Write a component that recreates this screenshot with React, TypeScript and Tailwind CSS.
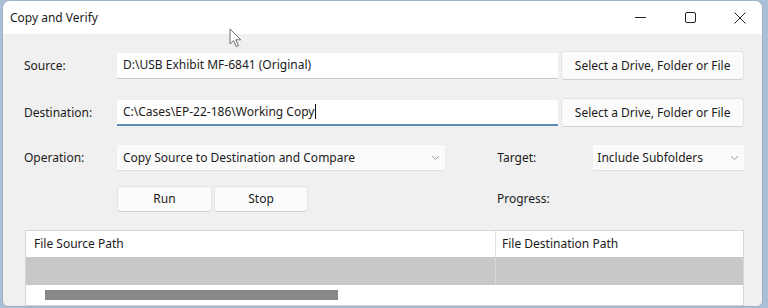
const font = { fontFamily: '"Segoe UI", "Noto Sans", sans-serif' };

function Chevron() {
  return (
    <svg width="9" height="6" viewBox="0 0 9 6" className="shrink-0">
      <path d="M1 1.2 L4.5 4.6 L8 1.2" fill="none" stroke="#9a9a9a" strokeWidth="1" />
    </svg>
  );
}

function Button({ label, className }: { label: string; className: string }) {
  return (
    <div
      className={`flex items-center justify-center rounded-[4px] border border-[#e3e3e3] border-b-[#d0d0d0] bg-[#fbfbfb] text-[12px] text-[#1b1b1b] ${className}`}
    >
      {label}
    </div>
  );
}

function Label({ text, className = "w-[93px]" }: { text: string; className?: string }) {
  return <div className={`shrink-0 text-[12px] text-[#1b1b1b] ${className}`}>{text}</div>;
}

export default function App() {
  return (
    <div className="h-[308px] w-[768px] overflow-hidden bg-[#a9bfd6]" style={font}>
      <div className="relative ml-[2px] h-[307px] w-[761px] overflow-hidden rounded-t-[8px] rounded-b-[6px] border border-[#9fb0c2] bg-[#f0f0f0]">
        {/* title bar */}
        <div className="flex h-[33px] items-center bg-white">
          <div className="pl-[7px] text-[12px] text-[#1b1b1b]">Copy and Verify</div>
          <div className="ml-auto flex h-full items-center">
            <div className="flex h-full w-[50px] items-center justify-center">
              <svg width="11" height="11" viewBox="0 0 11 11">
                <path d="M0 5.5 H11" stroke="#222" strokeWidth="1" />
              </svg>
            </div>
            <div className="mr-[3px] flex h-full w-[50px] items-center justify-center">
              <svg width="11" height="11" viewBox="0 0 11 11">
                <rect x="0.5" y="0.5" width="10" height="10" rx="1.5" fill="none" stroke="#222" strokeWidth="1" />
              </svg>
            </div>
            <div className="flex h-full w-[44px] items-center justify-center">
              <svg width="12" height="12" viewBox="0 0 12 12">
                <path d="M0.5 0.5 L11.5 11.5 M11.5 0.5 L0.5 11.5" stroke="#222" strokeWidth="1" />
              </svg>
            </div>
          </div>
        </div>

        {/* body */}
        <div className="pl-[21px] pr-[18px] pt-[17px]">
          <div className="flex h-[29px] items-center">
            <Label text="Source:" />
            <div className="flex h-[26px] w-[442px] items-center border-b border-[#c9c9c9] bg-white pl-[6px] text-[12px] text-[#1b1b1b]">
              D:\USB Exhibit MF-6841 (Original)
            </div>
            <Button label="Select a Drive, Folder or File" className="ml-[3px] h-[29px] w-[183px]" />
          </div>

          <div className="mt-[18px] flex h-[29px] items-center">
            <Label text="Destination:" />
            <div className="flex h-[26px] w-[442px] items-center border-b-2 border-[#5b8db8] bg-white pl-[6px] text-[12px] text-[#1b1b1b]">
              C:\Cases\EP-22-186\Working Copy
              <span className="ml-[1px] h-[15px] w-[1px] bg-[#111]" />
            </div>
            <Button label="Select a Drive, Folder or File" className="ml-[3px] h-[29px] w-[183px]" />
          </div>

          <div className="mt-[18px] flex h-[25px] items-center">
            <Label text="Operation:" />
            <div className="flex h-[25px] w-[329px] items-center justify-between bg-[#fbfbfb] pl-[6px] pr-[5px] text-[12px] text-[#1b1b1b] shadow-[0_1px_1px_rgba(0,0,0,0.06)]">
              Copy Source to Destination and Compare
              <Chevron />
            </div>
            <Label text="Target:" className="ml-[52px] w-[96px]" />
            <div className="flex h-[25px] w-[151px] items-center justify-between bg-[#fbfbfb] pl-[4px] pr-[5px] text-[12px] text-[#1b1b1b] shadow-[0_1px_1px_rgba(0,0,0,0.06)]">
              Include Subfolders
              <Chevron />
            </div>
          </div>

          <div className="mt-[16px] flex h-[26px] items-center">
            <div className="w-[93px] shrink-0" />
            <Button label="Run" className="h-[26px] w-[95px]" />
            <Button label="Stop" className="ml-[2px] h-[26px] w-[94px]" />
            <Label text="Progress:" className="ml-[189px] w-[80px]" />
          </div>

          <div className="ml-[1px] mt-[18px] w-[719px] border border-[#d6d6d6] bg-white">
            <div className="flex h-[26px] items-center text-[12px] text-[#1b1b1b]">
              <div className="w-[469px] pl-[8px]">File Source Path</div>
              <div className="flex h-full items-center border-l border-[#e2e2e2] pl-[6px]">File Destination Path</div>
            </div>
            <div className="flex h-[28px] bg-[#c8c8c8]">
              <div className="w-[469px]" />
              <div className="border-l border-[#d8d8d8]" />
            </div>
            <div className="h-[20px] pl-[19px] pt-[5px]">
              <div className="h-[10px] w-[293px] bg-[#888888]" />
            </div>
          </div>
        </div>

        {/* mouse pointer */}
        <svg className="absolute left-[226px] top-[27px]" width="14" height="21" viewBox="0 0 14 21">
          <path
            d="M1 1 L1 16 L4.6 12.6 L7.2 18.6 L9.4 17.6 L6.8 11.8 L11.8 11.8 Z"
            fill="#fff"
            stroke="#6b6b6b"
            strokeWidth="1"
            strokeLinejoin="round"
          />
        </svg>
      </div>
    </div>
  );
}
